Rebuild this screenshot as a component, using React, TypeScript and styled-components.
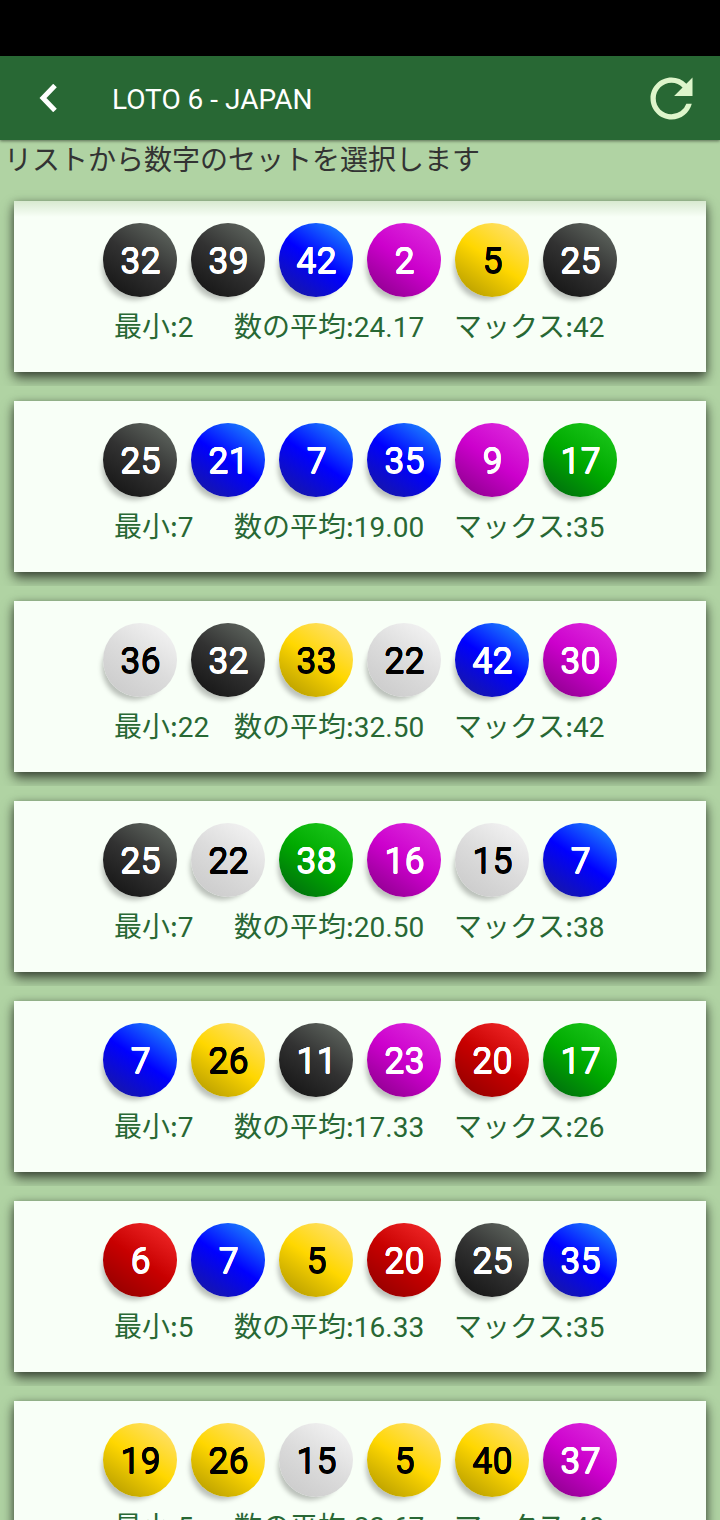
import React from "react";
import styled, { createGlobalStyle } from "styled-components";

const GlobalStyle = createGlobalStyle`
  * { box-sizing: border-box; }
  body {
    margin: 0;
    background: #b0d3a3;
    font-family: Roboto, "Noto Sans CJK JP", sans-serif;
  }
`;

const palettes = {
  black: ["#101010", "#323232", "#687068", "#fff"],
  blue: ["#1c1c94", "#0000ff", "#22a0ff", "#fff"],
  magenta: ["#840084", "#cc00cc", "#e032e0", "#fff"],
  yellow: ["#aa9300", "#ffd700", "#ffe286", "#000"],
  green: ["#006410", "#00aa00", "#20cc20", "#fff"],
  white: ["#c8c8c8", "#dcdcdc", "#f8f8f8", "#000"],
  red: ["#8a0000", "#c80000", "#f83030", "#fff"],
} as const;

type Color = keyof typeof palettes;

interface Draw {
  balls: [number, Color][];
  min: number;
  average: string;
  max: number;
}

const draws: Draw[] = [
  { balls: [[32, "black"], [39, "black"], [42, "blue"], [2, "magenta"], [5, "yellow"], [25, "black"]], min: 2, average: "24.17", max: 42 },
  { balls: [[25, "black"], [21, "blue"], [7, "blue"], [35, "blue"], [9, "magenta"], [17, "green"]], min: 7, average: "19.00", max: 35 },
  { balls: [[36, "white"], [32, "black"], [33, "yellow"], [22, "white"], [42, "blue"], [30, "magenta"]], min: 22, average: "32.50", max: 42 },
  { balls: [[25, "black"], [22, "white"], [38, "green"], [16, "magenta"], [15, "white"], [7, "blue"]], min: 7, average: "20.50", max: 38 },
  { balls: [[7, "blue"], [26, "yellow"], [11, "black"], [23, "magenta"], [20, "red"], [17, "green"]], min: 7, average: "17.33", max: 26 },
  { balls: [[6, "red"], [7, "blue"], [5, "yellow"], [20, "red"], [25, "black"], [35, "blue"]], min: 5, average: "16.33", max: 35 },
  { balls: [[19, "yellow"], [26, "yellow"], [15, "white"], [5, "yellow"], [40, "yellow"], [37, "magenta"]], min: 5, average: "23.67", max: 40 },
];

const Screen = styled.div`
  display: flex;
  flex-direction: column;
  height: 100vh;
  overflow: hidden;
`;

const StatusBar = styled.div`
  flex: none;
  height: 56px;
  background: #000;
`;

const AppBar = styled.header`
  flex: none;
  display: flex;
  align-items: center;
  height: 84px;
  padding-right: 17px;
  background: #286834;
  box-shadow: 0 1px 3px rgba(0, 0, 0, 0.5);
`;

const IconButton = styled.button<{ $width: number }>`
  display: flex;
  align-items: center;
  justify-content: center;
  width: ${({ $width }) => $width}px;
  height: 84px;
  padding: 0;
  border: 0;
  background: none;
  cursor: pointer;
`;

const Title = styled.h1`
  flex: 1;
  margin: 0 0 0 16px;
  padding-top: 4px;
  color: #fff;
  font-size: 28px;
  font-weight: 400;
  line-height: 36px;
`;

const Prompt = styled.p`
  flex: none;
  margin: 0;
  padding: 0 4px;
  height: 46px;
  color: #333;
  font-size: 28px;
  line-height: 42px;
`;

const DrawList = styled.ul`
  flex: 1;
  min-height: 0;
  margin: 0;
  padding: 0;
  list-style: none;
  overflow-y: auto;
  scrollbar-width: none;
`;

const DrawItem = styled.li`
  padding: 15px 14px 14px;
  overflow: hidden;
`;

const Card = styled.article<{ $faded: boolean }>`
  display: flex;
  flex-direction: column;
  align-items: center;
  height: 171px;
  padding-top: 22px;
  background: ${({ $faded }) =>
    $faded ? "linear-gradient(#d8e9d0, #f8fff7 16px)" : "#f8fff7"};
  box-shadow: 0 7px 12px rgba(0, 0, 0, 0.5), 0 2px 8px rgba(0, 0, 0, 0.4);
`;

const Balls = styled.div`
  display: flex;
  gap: 14px;
`;

const Ball = styled.span<{ $color: Color }>`
  display: flex;
  align-items: center;
  justify-content: center;
  width: 74px;
  height: 74px;
  border-radius: 50%;
  background: ${({ $color }) => {
    const [dark, base, light] = palettes[$color];
    return `linear-gradient(34deg, ${dark}, ${base} 50%, ${light})`;
  }};
  box-shadow: -6px 8px 5px -5px rgba(0, 0, 0, 0.25);
  color: ${({ $color }) => palettes[$color][3]};
  font-size: 36px;
  line-height: 42px;
  padding: 2px 0 0 1px;
  text-shadow: 0 0 currentColor, 0 0 currentColor, 0 0 currentColor, 0 1px currentColor;
`;

const Stats = styled.div`
  display: grid;
  grid-template-columns: 120px 220px 152px;
  margin-top: 7px;
  color: #286834;
  font-size: 28px;
  line-height: 42px;
  white-space: nowrap;
`;

const StatLabel = styled.span`
  font-family: "Noto Sans CJK JP", sans-serif;
`;

export default function App() {
  return (
    <Screen>
      <GlobalStyle />
      <StatusBar />
      <AppBar>
        <IconButton $width={96} type="button" aria-label="戻る">
          <svg width="18" height="28" viewBox="0 0 18 28" fill="none" stroke="#fff" strokeWidth="5">
            <path d="M16 1.5 4 14l12 12.5" />
          </svg>
        </IconButton>
        <Title>LOTO 6 - JAPAN</Title>
        <IconButton $width={64} type="button" aria-label="更新">
          <svg width="63" height="63" viewBox="0 0 24 24" fill="#def5cb">
            <path d="M17.65 6.35A7.958 7.958 0 0 0 12 4c-4.42 0-7.99 3.58-7.99 8s3.57 8 7.99 8c3.73 0 6.84-2.55 7.73-6h-2.08A5.99 5.99 0 0 1 12 18c-3.31 0-6-2.69-6-6s2.69-6 6-6c1.66 0 3.14.69 4.22 1.78L13 11h7V4l-2.35 2.35z" />
          </svg>
        </IconButton>
      </AppBar>
      <Prompt>リストから数字のセットを選択します</Prompt>
      <DrawList>
        {draws.map((draw, index) => (
          <DrawItem key={index}>
            <Card $faded={index === 0}>
              <Balls>
                {draw.balls.map(([value, color]) => (
                  <Ball key={value} $color={color}>{value}</Ball>
                ))}
              </Balls>
              <Stats>
                <span><StatLabel>最小:</StatLabel>{draw.min}</span>
                <span><StatLabel>数の平均:</StatLabel>{draw.average}</span>
                <span><StatLabel>マックス:</StatLabel>{draw.max}</span>
              </Stats>
            </Card>
          </DrawItem>
        ))}
      </DrawList>
    </Screen>
  );
}
